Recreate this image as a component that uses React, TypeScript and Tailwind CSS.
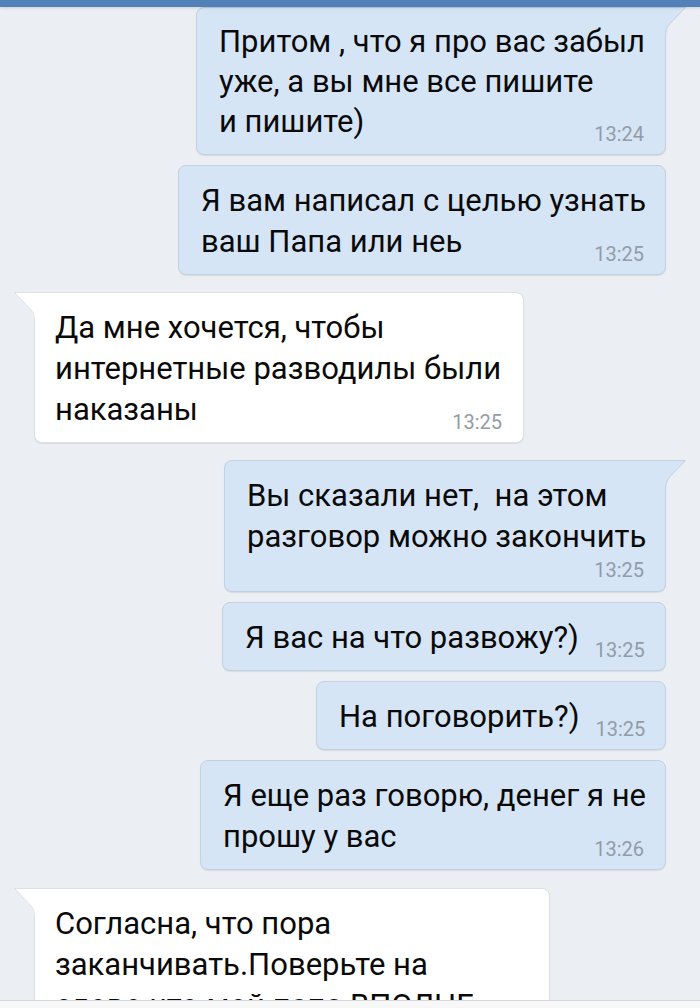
type Msg = {
  out: boolean;
  lines: string[];
  time: string;
  width: string;
  tail?: boolean;
  timeBelow?: boolean;
  margin: string;
  leading?: string;
};

const messages: Msg[] = [
  {
    out: true,
    tail: true,
    lines: ['Притом , что я про вас забыл', 'уже, а вы мне все пишите', 'и пишите)'],
    time: '13:24',
    width: 'w-[470px]',
    margin: 'mt-0',
    leading: 'leading-[40px]',
  },
  {
    out: true,
    lines: ['Я вам написал с целью узнать', 'ваш Папа или неь'],
    time: '13:25',
    width: 'w-[488px]',
    margin: 'mt-[10px]',
  },
  {
    out: false,
    tail: true,
    lines: ['Да мне хочется, чтобы', 'интернетные разводилы были', 'наказаны'],
    time: '13:25',
    width: 'w-[490px]',
    margin: 'mt-[17px]',
  },
  {
    out: true,
    tail: true,
    timeBelow: true,
    lines: ['Вы сказали нет,  на этом', 'разговор можно закончить'],
    time: '13:25',
    width: 'w-[442px]',
    margin: 'mt-[17px]',
  },
  {
    out: true,
    lines: ['Я вас на что развожу?)'],
    time: '13:25',
    width: 'w-[444px]',
    margin: 'mt-[10px]',
  },
  {
    out: true,
    lines: ['На поговорить?)'],
    time: '13:25',
    width: 'w-[350px]',
    margin: 'mt-[10px]',
  },
  {
    out: true,
    lines: ['Я еще раз говорю, денег я не', 'прошу у вас'],
    time: '13:26',
    width: 'w-[466px]',
    margin: 'mt-[10px]',
  },
  {
    out: false,
    tail: true,
    lines: ['Согласна, что пора', 'заканчивать.Поверьте на', 'слово что мой папа ВПОЛНЕ', 'обычный человек'],
    time: '13:27',
    width: 'w-[516px]',
    margin: 'mt-[18px]',
  },
];

function Tail({ out }: { out: boolean }) {
  // little corner flag of the bubble, drawn over its border
  if (out) {
    return (
      <svg className="absolute left-full top-[-1px]" width="22" height="30" viewBox="0 0 22 30">
        <path d="M0 0 H21 L5 17 Q1 21 1 30 H0 Z" fill="#d6e5f6" />
        <path d="M0 0.5 H20.5 L4.6 17 Q0.5 21 0.5 30" fill="none" stroke="#c3d1e2" strokeWidth="1" />
      </svg>
    );
  }
  return (
    <svg className="absolute right-full top-[-1px]" width="22" height="30" viewBox="0 0 22 30">
      <path d="M22 0 H1 L17 17 Q21 21 21 30 H22 Z" fill="#ffffff" />
      <path d="M22 0.5 H1.5 L17.4 17 Q21.5 21 21.5 30" fill="none" stroke="#dce0e6" strokeWidth="1" />
    </svg>
  );
}

function Bubble({ m }: { m: Msg }) {
  const last = m.lines.length - 1;
  return (
    <div
      className={`relative shrink-0 ${m.width} ${m.margin} ${
        m.out
          ? 'self-end mr-[34px] bg-[#d6e5f6] border border-[#c3d1e2] pl-[22px]'
          : 'self-start ml-[34px] bg-white border border-[#dce0e6] pl-[20px]'
      } rounded-lg ${m.tail ? (m.out ? 'rounded-tr-none' : 'rounded-tl-none') : ''} shadow-[0_1px_1px_rgba(0,0,0,0.08)] pr-[21px] pt-[14px] pb-[12px]`}
    >
      {m.tail && <Tail out={m.out} />}
      <div className={`text-[31px] ${m.leading ?? 'leading-[41px]'} text-[#0a0a0a] whitespace-pre`}>
        {m.lines.map((line, i) =>
          i === last && !m.timeBelow ? (
            <div key={i} className="flex items-end justify-between">
              <span>{line}</span>
              <span className="text-[20px] leading-[16px] text-[#929ba6] pl-4">{m.time}</span>
            </div>
          ) : (
            <div key={i}>{line}</div>
          )
        )}
        {m.timeBelow && (
          <div className="flex h-[22px] items-end justify-end">
            <span className="text-[20px] leading-[18px] text-[#929ba6]">{m.time}</span>
          </div>
        )}
      </div>
    </div>
  );
}

export default function App() {
  return (
    <div
      className="flex h-[1008px] w-[700px] flex-col overflow-hidden bg-[#ebeef2]"
      style={{ fontFamily: 'Roboto, "Noto Sans", sans-serif' }}
    >
      <div className="h-[7px] shrink-0 bg-[#5181b8] shadow-[0_1px_3px_rgba(0,0,0,0.15)] relative z-10" />
      <div className="flex flex-1 flex-col overflow-hidden">
        {messages.map((m, i) => (
          <Bubble key={i} m={m} />
        ))}
      </div>
      <div className="h-[8px] shrink-0 border-t border-[#d3d8de] bg-[#f8f8f8]" />
    </div>
  );
}
